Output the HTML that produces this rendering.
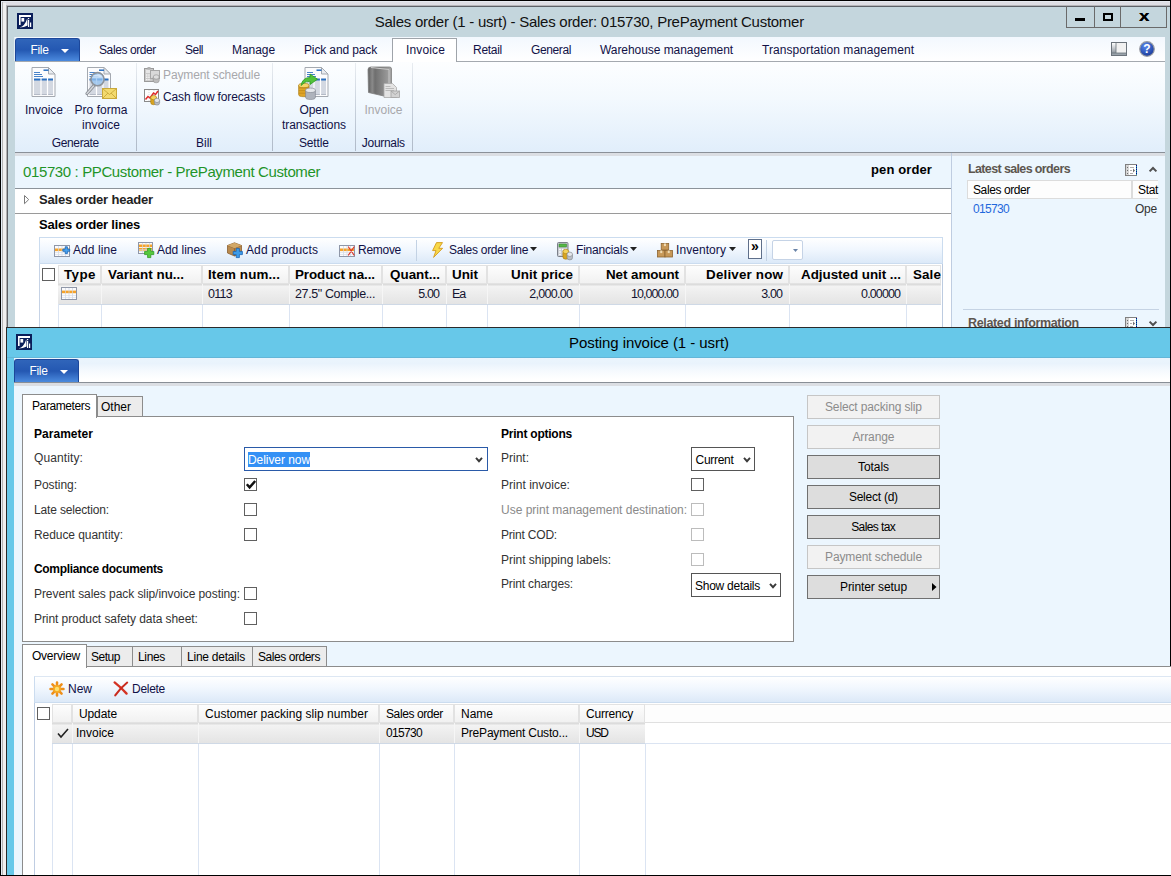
<!DOCTYPE html>
<html lang="en"><head><meta charset="utf-8"><title>Sales order - Posting invoice</title>
<style>
html,body{margin:0;padding:0;background:#fff;}
body{width:1171px;height:876px;overflow:hidden;font-family:"Liberation Sans",sans-serif;}
#root{position:relative;width:1171px;height:876px;overflow:hidden;background:#fff;}
#root div{position:absolute;box-sizing:border-box;}
#root svg{position:absolute;overflow:visible;}
.t{position:absolute;white-space:pre;color:#000;}
.cb{background:#fff;border:1px solid #606060;}
.cbd{background:#fff;border:1px solid #bcbcbc;}
.btn{background:#dddddd;border:1px solid #707070;}
.btnd{background:#f2f2f2;border:1px solid #c6c6c6;}
.file{background:linear-gradient(#3065ba,#2458b2 50%,#4b8ade);border:1px solid #1c479a;border-bottom:none;border-radius:3px 3px 0 0;}
.hc{background:linear-gradient(#fdfdfd,#f1f1f1);border:1px solid #e2e2e2;}

</style></head>
<body>
<div id="root">
<div style="left:0px;top:0px;width:1171px;height:876px;background:#000"></div>
<div style="left:1px;top:1px;width:1169px;height:1px;background:#e6eaf0"></div>
<div style="left:1px;top:2px;width:1169px;height:3px;background:#dedee4"></div>
<div style="left:1px;top:5px;width:1169px;height:1px;background:#b4b4b8"></div>
<div style="left:1px;top:6px;width:1169px;height:1px;background:#5e6268"></div>
<div style="left:1px;top:7px;width:1169px;height:868px;background:#c4d6dd"></div>
<div style="left:1px;top:1px;width:1px;height:874px;background:#e6eef6"></div>
<div style="left:2px;top:2px;width:1px;height:873px;background:#b4b4b4"></div>
<div style="left:3px;top:3px;width:3px;height:872px;background:#efefef"></div>
<div style="left:6px;top:6px;width:1px;height:869px;background:#b0b0b0"></div>
<div style="left:7px;top:6px;width:1px;height:869px;background:#5e6268"></div>
<div style="left:1170px;top:0px;width:1px;height:876px;background:#000"></div>
<span class="t" style="left:374.8px;top:12px;font-size:15px;line-height:19px;color:#111;letter-spacing:-0.26px;">Sales order (1 - usrt) - Sales order: 015730, PrePayment Customer</span>
<div style="left:1066px;top:6px;width:101px;height:22px;border:1px solid #6a6a6a;border-top:none;background:transparent"></div>
<div style="left:1094px;top:6px;width:1px;height:21px;background:#6a6a6a"></div>
<div style="left:1120px;top:6px;width:1px;height:21px;background:#6a6a6a"></div>
<div style="left:1075px;top:18px;width:10px;height:3px;background:#000"></div>
<div style="left:1103px;top:13px;width:10px;height:8px;border:2px solid #000"></div>
<span class="t" style="left:1140.3px;top:6px;font-size:15px;line-height:19px;font-weight:700;transform:scaleX(1.25);text-shadow:0 0 .5px #000;">x</span>
<div style="left:15px;top:37px;width:1150px;height:25px;background:linear-gradient(#f3f8fe,#ffffff)"></div>
<div style="left:14px;top:37px;width:1px;height:24px;background:#e4eef4"></div>
<div style="left:15px;top:61px;width:1150px;height:91px;background:linear-gradient(#fdfeff,#f3f9fe 42%,#e1eefb)"></div>
<div style="left:15px;top:61px;width:1150px;height:1px;background:#a4a9af"></div>
<div style="left:15px;top:152px;width:1150px;height:1px;background:#8a9098"></div>
<div class="file" style="left:15px;top:38px;width:65px;height:23px;"></div>
<span class="t" style="left:30.5px;top:42px;font-size:12px;line-height:16px;color:#fff;letter-spacing:-0.34px;">File</span>
<svg style="left:61px;top:49px" width="8" height="4"><path d="M0 0h8L4 4z" fill="#fff"/></svg>
<div style="left:392px;top:38px;width:65px;height:24px;background:#fff;border:1px solid #9fa4aa;border-bottom:none"></div>
<span class="t" style="left:99px;top:42px;font-size:12px;line-height:16px;color:#111146;letter-spacing:-0.4px;">Sales order</span>
<span class="t" style="left:185px;top:42px;font-size:12px;line-height:16px;color:#111146;letter-spacing:-0.5px;">Sell</span>
<span class="t" style="left:232px;top:42px;font-size:12px;line-height:16px;color:#111146;letter-spacing:-0.06px;">Manage</span>
<span class="t" style="left:304px;top:42px;font-size:12px;line-height:16px;color:#111146;letter-spacing:-0.13px;">Pick and pack</span>
<span class="t" style="left:406px;top:42px;font-size:12px;line-height:16px;color:#111146;letter-spacing:0.14px;">Invoice</span>
<span class="t" style="left:473px;top:42px;font-size:12px;line-height:16px;color:#111146;letter-spacing:-0.28px;">Retail</span>
<span class="t" style="left:531px;top:42px;font-size:12px;line-height:16px;color:#111146;letter-spacing:-0.39px;">General</span>
<span class="t" style="left:600px;top:42px;font-size:12px;line-height:16px;color:#111146;letter-spacing:-0.06px;">Warehouse management</span>
<span class="t" style="left:762px;top:42px;font-size:12px;line-height:16px;color:#111146;letter-spacing:0.07px;">Transportation management</span>
<div style="left:136px;top:63px;width:1px;height:88px;background:linear-gradient(rgba(175,185,198,.25),#b0bac8)"></div>
<div style="left:272px;top:63px;width:1px;height:88px;background:linear-gradient(rgba(175,185,198,.25),#b0bac8)"></div>
<div style="left:355px;top:63px;width:1px;height:88px;background:linear-gradient(rgba(175,185,198,.25),#b0bac8)"></div>
<div style="left:412px;top:63px;width:1px;height:88px;background:linear-gradient(rgba(175,185,198,.25),#b0bac8)"></div>
<span class="t" style="left:51.8px;top:135px;font-size:12px;line-height:16px;color:#111146;letter-spacing:-0.38px;">Generate</span>
<span class="t" style="left:196.0px;top:135px;font-size:12px;line-height:16px;color:#111146;">Bill</span>
<span class="t" style="left:298.9px;top:135px;font-size:12px;line-height:16px;color:#111146;letter-spacing:-0.11px;">Settle</span>
<span class="t" style="left:361.8px;top:135px;font-size:12px;line-height:16px;color:#111146;letter-spacing:-0.29px;">Journals</span>
<span class="t" style="left:25.0px;top:102px;font-size:12px;line-height:16px;color:#111146;">Invoice</span>
<span class="t" style="left:74.5px;top:102px;font-size:12px;line-height:16px;color:#111146;letter-spacing:0.03px;">Pro forma</span>
<span class="t" style="left:82.1px;top:117px;font-size:12px;line-height:16px;color:#111146;letter-spacing:0.09px;">invoice</span>
<span class="t" style="left:299.5px;top:102px;font-size:12px;line-height:16px;color:#111146;letter-spacing:-0.09px;">Open</span>
<span class="t" style="left:282.0px;top:117px;font-size:12px;line-height:16px;color:#111146;letter-spacing:-0.06px;">transactions</span>
<span class="t" style="left:364.5px;top:102px;font-size:12px;line-height:16px;color:#a8a8ac;">Invoice</span>
<span class="t" style="left:163px;top:67px;font-size:12px;line-height:16px;color:#a8a8ac;letter-spacing:-0.11px;">Payment schedule</span>
<span class="t" style="left:163px;top:89px;font-size:12px;line-height:16px;color:#111146;letter-spacing:-0.14px;">Cash flow forecasts</span>
<svg style="left:17px;top:13px" width="16" height="16" viewBox="0 0 16 16"><rect width="16" height="16" fill="#0b1f5a"/><rect x="2" y="2" width="12" height="2" fill="#fff"/><rect x="2" y="2" width="1.6" height="10" fill="#fff"/><rect x="4.4" y="5" width="2.8" height="3.6" fill="#fff"/><path d="M2.5 14.6Q8 13 10.3 5.2L10.6 12.5Q7 14.6 2.5 14.6z" fill="#fff"/><rect x="11" y="7" width="1.2" height="7" fill="#fff"/><rect x="11" y="5" width="1.2" height="1.2" fill="#fff"/><rect x="13" y="9.5" width="1.2" height="4.5" fill="#fff"/></svg>
<svg style="left:28px;top:66px" width="32" height="32" viewBox="0 0 32 32"><g transform="translate(3.5,1)"><path d="M.5 .5h16.5l6.5 6.5v22.5h-23z" fill="#fcfcfd" stroke="#a4a9b0"/><path d="M17 .5v6.5h6.5z" fill="#e9ecf0" stroke="#a4a9b0" stroke-linejoin="round"/><rect x="2.5" y="12" width="19" height="15.5" fill="#d3d8e1"/><rect x="2.5" y="27" width="19" height="1" fill="#b4bac6"/><rect x="2.5" y="11.5" width="19" height="2" fill="#2a6fc0"/><path d="M9.5 11v17M16 11v17" stroke="#fff" stroke-width="1.2"/><path d="M2.5 5.5h6M2.5 7.5h8M2.5 9.5h9" stroke="#2a6fc0" stroke-width="1" opacity=".85"/><path d="M12 3.2h5" stroke="#2a6fc0" stroke-width="1.5"/></g></svg>
<svg style="left:85px;top:66px" width="32" height="32" viewBox="0 0 32 32"><g transform="translate(2,1)"><path d="M.5 .5h16.5l6.5 6.5v22.5h-23z" fill="#fcfcfd" stroke="#a4a9b0"/><path d="M17 .5v6.5h6.5z" fill="#e9ecf0" stroke="#a4a9b0" stroke-linejoin="round"/><rect x="2.5" y="12" width="19" height="15.5" fill="#d3d8e1"/><rect x="2.5" y="27" width="19" height="1" fill="#b4bac6"/><rect x="2.5" y="11.5" width="19" height="2" fill="#2a6fc0"/><path d="M9.5 11v17M16 11v17" stroke="#fff" stroke-width="1.2"/><path d="M2.5 5.5h6M2.5 7.5h8M2.5 9.5h9" stroke="#2a6fc0" stroke-width="1" opacity=".85"/><path d="M12 3.2h5" stroke="#2a6fc0" stroke-width="1.5"/></g><path d="M9 19.5L2 27.5" stroke="#8a8f96" stroke-width="3.2" stroke-linecap="round"/><path d="M9 19.5L2 27.5" stroke="#d5d8dc" stroke-width="1.4" stroke-linecap="round"/><circle cx="12.5" cy="13.2" r="6.6" fill="rgba(150,195,240,.78)" stroke="#8d939b" stroke-width="1.6"/><path d="M7.5 11.5a5.5 5.5 0 0 1 10 0z" fill="rgba(255,255,255,.45)"/><rect x="17.5" y="22.5" width="14" height="10" fill="#f3da6e" stroke="#c9a83a"/><path d="M17.5 22.5L24.5 28.5L31.5 22.5M17.5 32.5L23 27M31.5 32.5L26 27" fill="none" stroke="#c9a83a" stroke-width=".9"/></svg>
<svg style="left:144px;top:67px" width="16" height="16" viewBox="0 0 16 16"><rect x=".5" y="1.5" width="9" height="13" fill="#c9c9c9" stroke="#9a9a9a"/><rect x="2" y="3" width="6" height="3" fill="#e6e6e6"/><path d="M2 8h1.5M4.2 8h1.5M6.4 8h1.5M2 10.3h1.5M4.2 10.3h1.5M6.4 10.3h1.5M2 12.6h1.5M4.2 12.6h1.5" stroke="#f2f2f2" stroke-width="1.4"/><rect x="6.5" y="3.5" width="9" height="8" fill="#d9d9d9" stroke="#a6a6a6"/><rect x="3.5" y="0" width="3" height="2.5" fill="#b0b0b0"/><path d="M9.2 10v3.6a3 2.2 0 0 0 6 0v-3.6z" fill="#bdbdbd" stroke="#8e8e8e" stroke-width=".6"/><ellipse cx="12.2" cy="10" rx="3" ry="2.2" fill="#dedede" stroke="#8e8e8e" stroke-width=".6"/></svg>
<svg style="left:144px;top:89px" width="16" height="16" viewBox="0 0 16 16"><rect x=".5" y=".5" width="14" height="12" fill="#fdfdfd" stroke="#8a8a8a"/><path d="M5 1v11M10 1v11" stroke="#c8c8c8" stroke-width=".6" stroke-dasharray="1 1"/><path d="M1.5 10.5L4 7.5L6 9L9.5 4L11.5 5.5L14 2" fill="none" stroke="#e02a2a" stroke-width="1.5"/><path d="M6.699999999999999 8.6v4.9a2.9 2.2 0 0 0 5.8 0v-4.9z" fill="#d9a520" stroke="#a67a10" stroke-width=".6"/><ellipse cx="9.6" cy="8.6" rx="2.9" ry="2.2" fill="#f4d25a" stroke="#a67a10" stroke-width=".6"/><path d="M10.4 11.4v2.5a2.6 2.2 0 0 0 5.2 0v-2.5z" fill="#b9bdc4" stroke="#80858c" stroke-width=".6"/><ellipse cx="13" cy="11.4" rx="2.6" ry="2.2" fill="#e3e6ea" stroke="#80858c" stroke-width=".6"/></svg>
<svg style="left:298px;top:66px" width="32" height="32" viewBox="0 0 32 32"><g transform="translate(6.5,1)"><path d="M.5 .5h16.5l6.5 6.5v22.5h-23z" fill="#fcfcfd" stroke="#a4a9b0"/><path d="M17 .5v6.5h6.5z" fill="#e9ecf0" stroke="#a4a9b0" stroke-linejoin="round"/><rect x="2.5" y="12" width="19" height="15.5" fill="#d3d8e1"/><rect x="2.5" y="27" width="19" height="1" fill="#b4bac6"/><rect x="2.5" y="11.5" width="19" height="2" fill="#2a6fc0"/><path d="M9.5 11v17M16 11v17" stroke="#fff" stroke-width="1.2"/><path d="M2.5 5.5h6M2.5 7.5h8M2.5 9.5h9" stroke="#2a6fc0" stroke-width="1" opacity=".85"/><path d="M12 3.2h5" stroke="#2a6fc0" stroke-width="1.5"/></g><path d="M0.5999999999999996 19.5v9a5.2 2.2 0 0 0 10.4 0v-9z" fill="#dfa427" stroke="#a6780f" stroke-width=".6"/><ellipse cx="5.8" cy="19.5" rx="5.2" ry="2.2" fill="#f6d66a" stroke="#a6780f" stroke-width=".6"/><path d="M.8 22h10M.8 24.6h10M.8 27.2h10" stroke="#b98314" stroke-width=".6"/><path d="M7.6 24.3v7a4.9 2.2 0 0 0 9.8 0v-7z" fill="#aeb3bc" stroke="#7c828b" stroke-width=".6"/><ellipse cx="12.5" cy="24.3" rx="4.9" ry="2.2" fill="#e6e8ec" stroke="#7c828b" stroke-width=".6"/><path d="M3 19.5Q4.5 11.5 12 11.5V8L19.5 13.2L12 18.5V15.2Q7 15 3 19.5z" fill="#52c23a" stroke="#2f9a22" stroke-width=".8" stroke-linejoin="round"/></svg>
<svg style="left:367px;top:66px" width="32" height="32" viewBox="0 0 32 32"><defs><linearGradient id="bk" x1="0" x2="1"><stop offset="0" stop-color="#5f5f5f"/><stop offset=".18" stop-color="#8a8a8a"/><stop offset=".3" stop-color="#6f6f6f"/><stop offset="1" stop-color="#a6a6a6"/></linearGradient></defs><path d="M1 3.5Q1 1 4 1H22.5Q24.5 1 24.5 3V26L19 30.5L1.5 26.5z" fill="url(#bk)" stroke="#7d7d7d" stroke-width=".8"/><path d="M4 1.5L22 3.5V27" fill="none" stroke="#c9c9c9" stroke-width="1"/><path d="M17 17.5h8.5l4 4v10h-12.5z" fill="#e3e3e3" stroke="#a9a9a9" stroke-width=".8"/><path d="M18.5 20.5h5M18.5 22.5h8.5M18.5 24.5h8.5" stroke="#b5b5b5" stroke-width=".9"/><rect x="24" y="25" width="8.5" height="6.5" fill="#d2d2d2" stroke="#a3a3a3" stroke-width=".8"/><path d="M24 25L28.2 28.6L32.5 25" fill="none" stroke="#a3a3a3" stroke-width=".8"/></svg>
<svg style="left:1111px;top:42px" width="16" height="14" viewBox="0 0 16 14"><defs><linearGradient id="lg1" x1="0" y1="0" x2="0" y2="1"><stop offset="0" stop-color="#fff"/><stop offset="1" stop-color="#8f979f"/></linearGradient></defs><rect x=".5" y=".5" width="15" height="13" fill="#f1f1f1" stroke="#6b737b"/><rect x="1" y="1" width="4" height="10" fill="url(#lg1)"/><path d="M5 1v10" stroke="#6b737b" stroke-width=".8"/><rect x="1" y="11" width="14" height="2" fill="#9aa3ab"/><path d="M1 11h14" stroke="#6b737b" stroke-width=".8"/></svg>
<svg style="left:1139px;top:41px" width="16" height="16" viewBox="0 0 16 16"><defs><radialGradient id="hg" cx=".4" cy=".3" r=".8"><stop offset="0" stop-color="#5a8af0"/><stop offset="1" stop-color="#12318f"/></radialGradient></defs><circle cx="8" cy="8" r="7.3" fill="url(#hg)" stroke="#9a9da3" stroke-width="1.2"/><text x="8" y="12.3" text-anchor="middle" font-family="Liberation Sans, sans-serif" font-weight="700" font-size="12" fill="#fff">?</text></svg>
<div style="left:15px;top:153px;width:1150px;height:175px;background:#ecf6fe"></div>
<div style="left:15px;top:153px;width:1150px;height:3px;background:#dbdee3"></div>
<div style="left:15px;top:189px;width:936px;height:139px;background:#fff"></div>
<div style="left:951px;top:153px;width:1px;height:175px;background:#bfcde1"></div>
<div style="left:15px;top:188px;width:936px;height:1px;background:#8c939a"></div>
<div style="left:15px;top:213px;width:936px;height:1px;background:#9a9a9a"></div>
<span class="t" style="left:23px;top:162px;font-size:15px;line-height:19px;color:#1f9428;letter-spacing:-0.38px;">015730 : PPCustomer - PrePayment Customer</span>
<span class="t" style="left:871px;top:161px;font-size:13px;line-height:17px;font-weight:700;letter-spacing:0.11px;">pen order</span>
<svg style="left:24px;top:195px" width="6" height="10"><path d="M.5 .5L4.7 4.6L.5 8.7z" fill="none" stroke="#7a7a7a" stroke-width="1"/></svg>
<span class="t" style="left:39px;top:191px;font-size:13px;line-height:17px;font-weight:700;color:#222;letter-spacing:-0.17px;">Sales order header</span>
<span class="t" style="left:39px;top:216px;font-size:13px;line-height:17px;font-weight:700;letter-spacing:-0.18px;">Sales order lines</span>
<div style="left:39px;top:237px;width:904px;height:27px;background:linear-gradient(#ffffff,#f1f7fe 45%,#dce9f8);border:1px solid #cbdcef"></div>
<span class="t" style="left:73px;top:242px;font-size:12px;line-height:16px;color:#101046;letter-spacing:0.08px;">Add line</span>
<span class="t" style="left:157px;top:242px;font-size:12px;line-height:16px;color:#101046;letter-spacing:-0.04px;">Add lines</span>
<span class="t" style="left:246px;top:242px;font-size:12px;line-height:16px;color:#101046;letter-spacing:0.11px;">Add products</span>
<span class="t" style="left:358px;top:242px;font-size:12px;line-height:16px;color:#101046;letter-spacing:-0.28px;">Remove</span>
<span class="t" style="left:449px;top:242px;font-size:12px;line-height:16px;color:#101046;letter-spacing:-0.27px;">Sales order line</span>
<span class="t" style="left:576px;top:242px;font-size:12px;line-height:16px;color:#101046;letter-spacing:-0.2px;">Financials</span>
<span class="t" style="left:676px;top:242px;font-size:12px;line-height:16px;color:#101046;letter-spacing:0.07px;">Inventory</span>
<svg style="left:530px;top:247px" width="7" height="4"><path d="M0 0h7L3.5 4z" fill="#222"/></svg>
<svg style="left:630px;top:247px" width="7" height="4"><path d="M0 0h7L3.5 4z" fill="#222"/></svg>
<svg style="left:729px;top:247px" width="7" height="4"><path d="M0 0h7L3.5 4z" fill="#222"/></svg>
<div style="left:416px;top:240px;width:1px;height:21px;background:#c3d2e4"></div>
<div style="left:748px;top:239px;width:14px;height:20px;background:#fff;border:1px solid #5f6f8a"></div>
<span class="t" style="left:751.1px;top:237px;font-size:14px;line-height:18px;font-weight:700;">»</span>
<div style="left:766px;top:240px;width:1px;height:21px;background:#c3d2e4"></div>
<div style="left:772px;top:240px;width:31px;height:20px;background:#fff;border:1px solid #c5d3e6;border-radius:2px"></div>
<svg style="left:793px;top:249px" width="5" height="3"><path d="M0 0h5L2.5 3z" fill="#6a84a8"/></svg>
<div style="left:39px;top:264px;width:1px;height:63px;background:#c6d3e6"></div>
<div style="left:40px;top:264px;width:903px;height:20px;background:#fff"></div>
<div class="cb" style="left:42px;top:268px;width:13px;height:13px;"></div>
<div class="hc" style="left:58px;top:265px;width:43px;height:19px;"></div>
<div class="hc" style="left:101px;top:265px;width:101px;height:19px;"></div>
<div class="hc" style="left:202px;top:265px;width:87px;height:19px;"></div>
<div class="hc" style="left:289px;top:265px;width:93px;height:19px;"></div>
<div class="hc" style="left:382px;top:265px;width:64px;height:19px;"></div>
<div class="hc" style="left:446px;top:265px;width:41px;height:19px;"></div>
<div class="hc" style="left:487px;top:265px;width:92px;height:19px;"></div>
<div class="hc" style="left:579px;top:265px;width:106px;height:19px;"></div>
<div class="hc" style="left:685px;top:265px;width:104px;height:19px;"></div>
<div class="hc" style="left:789px;top:265px;width:117px;height:19px;"></div>
<div class="hc" style="left:906px;top:265px;width:35px;height:19px;"></div>
<span class="t" style="left:64px;top:266px;font-size:13.4px;line-height:17.4px;font-weight:700;letter-spacing:0.43px;">Type</span>
<span class="t" style="left:108px;top:266px;font-size:13.4px;line-height:17.4px;font-weight:700;letter-spacing:0.01px;">Variant nu...</span>
<span class="t" style="left:208px;top:266px;font-size:13.4px;line-height:17.4px;font-weight:700;letter-spacing:0.12px;">Item num...</span>
<span class="t" style="left:295px;top:266px;font-size:13.4px;line-height:17.4px;font-weight:700;letter-spacing:-0.09px;">Product na...</span>
<span class="t" style="left:390.0px;top:266px;font-size:13.4px;line-height:17.4px;font-weight:700;letter-spacing:0.02px;">Quant...</span>
<span class="t" style="left:452px;top:266px;font-size:13.4px;line-height:17.4px;font-weight:700;letter-spacing:-0.01px;">Unit</span>
<span class="t" style="left:511.1px;top:266px;font-size:13.4px;line-height:17.4px;font-weight:700;letter-spacing:0.02px;">Unit price</span>
<span class="t" style="left:606.0px;top:266px;font-size:13.4px;line-height:17.4px;font-weight:700;letter-spacing:-0.07px;">Net amount</span>
<span class="t" style="left:706.1px;top:266px;font-size:13.4px;line-height:17.4px;font-weight:700;letter-spacing:0.17px;">Deliver now</span>
<span class="t" style="left:801.0px;top:266px;font-size:13.4px;line-height:17.4px;font-weight:700;letter-spacing:-0.03px;">Adjusted unit ...</span>
<span class="t" style="left:913px;top:266px;font-size:13.4px;line-height:17.4px;font-weight:700;letter-spacing:0.11px;">Sale</span>
<div style="left:58px;top:284px;width:883px;height:21px;background:linear-gradient(#dcdcdc 0,#dcdcdc 1px,#f3f3f3 2px,#e4e4e4 100%);border-bottom:1px solid #cfd9e6"></div>
<div style="left:101px;top:284px;width:1px;height:20px;background:#f6f6f6"></div>
<div style="left:101px;top:305px;width:1px;height:23px;background:#dbe4f2"></div>
<div style="left:202px;top:284px;width:1px;height:20px;background:#f6f6f6"></div>
<div style="left:202px;top:305px;width:1px;height:23px;background:#dbe4f2"></div>
<div style="left:289px;top:284px;width:1px;height:20px;background:#f6f6f6"></div>
<div style="left:289px;top:305px;width:1px;height:23px;background:#dbe4f2"></div>
<div style="left:382px;top:284px;width:1px;height:20px;background:#f6f6f6"></div>
<div style="left:382px;top:305px;width:1px;height:23px;background:#dbe4f2"></div>
<div style="left:446px;top:284px;width:1px;height:20px;background:#f6f6f6"></div>
<div style="left:446px;top:305px;width:1px;height:23px;background:#dbe4f2"></div>
<div style="left:487px;top:284px;width:1px;height:20px;background:#f6f6f6"></div>
<div style="left:487px;top:305px;width:1px;height:23px;background:#dbe4f2"></div>
<div style="left:579px;top:284px;width:1px;height:20px;background:#f6f6f6"></div>
<div style="left:579px;top:305px;width:1px;height:23px;background:#dbe4f2"></div>
<div style="left:685px;top:284px;width:1px;height:20px;background:#f6f6f6"></div>
<div style="left:685px;top:305px;width:1px;height:23px;background:#dbe4f2"></div>
<div style="left:789px;top:284px;width:1px;height:20px;background:#f6f6f6"></div>
<div style="left:789px;top:305px;width:1px;height:23px;background:#dbe4f2"></div>
<div style="left:906px;top:284px;width:1px;height:20px;background:#f6f6f6"></div>
<div style="left:906px;top:305px;width:1px;height:23px;background:#dbe4f2"></div>
<div style="left:58px;top:304px;width:1px;height:24px;background:#dbe4f2"></div>
<span class="t" style="left:208px;top:286px;font-size:12.5px;line-height:16.5px;color:#141430;letter-spacing:-0.72px;">0113</span>
<span class="t" style="left:295px;top:286px;font-size:12.5px;line-height:16.5px;color:#141430;letter-spacing:-0.38px;">27.5" Comple...</span>
<span class="t" style="left:418.2px;top:286px;font-size:12.5px;line-height:16.5px;color:#141430;letter-spacing:-0.84px;">5.00</span>
<span class="t" style="left:452px;top:286px;font-size:12.5px;line-height:16.5px;color:#141430;letter-spacing:-1.2px;">Ea</span>
<span class="t" style="left:529.3px;top:286px;font-size:12.5px;line-height:16.5px;color:#141430;letter-spacing:-0.71px;">2,000.00</span>
<span class="t" style="left:631.1px;top:286px;font-size:12.5px;line-height:16.5px;color:#141430;letter-spacing:-0.96px;">10,000.00</span>
<span class="t" style="left:761.2px;top:286px;font-size:12.5px;line-height:16.5px;color:#141430;letter-spacing:-0.84px;">3.00</span>
<span class="t" style="left:861.1px;top:286px;font-size:12.5px;line-height:16.5px;color:#141430;letter-spacing:-0.88px;">0.00000</span>
<div style="left:942px;top:264px;width:1px;height:63px;background:#bccbe0"></div>
<span class="t" style="left:968px;top:161px;font-size:12.5px;line-height:16.5px;font-weight:700;color:#5d5650;letter-spacing:-0.63px;">Latest sales orders</span>
<div style="left:967px;top:180px;width:165px;height:19px;background:#fdfdfd;border:1px solid #dcdcdc"></div>
<div style="left:1132px;top:180px;width:26px;height:19px;background:#fdfdfd;border:1px solid #dcdcdc;border-right:none"></div>
<span class="t" style="left:973px;top:182px;font-size:12px;line-height:16px;letter-spacing:-0.4px;">Sales order</span>
<span class="t" style="left:1138px;top:182px;font-size:12px;line-height:16px;letter-spacing:-0.34px;">Stat</span>
<span class="t" style="left:973px;top:201px;font-size:12px;line-height:16px;color:#1f68dc;letter-spacing:-0.67px;">015730</span>
<span class="t" style="left:1135px;top:201px;font-size:12px;line-height:16px;color:#333;letter-spacing:-0.23px;">Ope</span>
<div style="left:963px;top:309px;width:196px;height:1px;background:#c5d3e4"></div>
<span class="t" style="left:968px;top:315px;font-size:12.5px;line-height:16.5px;font-weight:700;color:#5d5650;letter-spacing:-0.34px;">Related information</span>
<svg style="left:1125px;top:164px" width="12" height="12" viewBox="0 0 12 12"><rect x=".5" y=".5" width="11" height="11" fill="#fff" stroke="#808080"/><rect x="1" y="1" width="3" height="10" fill="#d6d6d6"/><path d="M2 3.5h1M2 6.5h1M2 9.5h1" stroke="#6e6e6e" stroke-width="1"/><path d="M5 3.5h4M5 6.5h2M5 9.5h3" stroke="#b0b0b0" stroke-width="1"/><path d="M8 4.5L10 6.5L8 8.5z" fill="#6e6e6e"/><path d="M11.5 1v10" stroke="#000090" stroke-width="1" stroke-dasharray="1 1"/><path d="M11.5 2v9" stroke="#1a9aa0" stroke-width="1" stroke-dasharray="1 1"/></svg>
<svg style="left:1125px;top:317px" width="12" height="12" viewBox="0 0 12 12"><rect x=".5" y=".5" width="11" height="11" fill="#fff" stroke="#808080"/><rect x="1" y="1" width="3" height="10" fill="#d6d6d6"/><path d="M2 3.5h1M2 6.5h1M2 9.5h1" stroke="#6e6e6e" stroke-width="1"/><path d="M5 3.5h4M5 6.5h2M5 9.5h3" stroke="#b0b0b0" stroke-width="1"/><path d="M8 4.5L10 6.5L8 8.5z" fill="#6e6e6e"/><path d="M11.5 1v10" stroke="#000090" stroke-width="1" stroke-dasharray="1 1"/><path d="M11.5 2v9" stroke="#1a9aa0" stroke-width="1" stroke-dasharray="1 1"/></svg>
<svg style="left:1148px;top:166px" width="10" height="7"><path d="M1.6 5.4L5 2L8.4 5.4" fill="none" stroke="#505050" stroke-width="2"/></svg>
<svg style="left:1148px;top:320px" width="10" height="7"><path d="M1.6 1.6L5 5L8.4 1.6" fill="none" stroke="#505050" stroke-width="2"/></svg>
<div style="left:6px;top:327px;width:1165px;height:549px;background:#2b2b2b"></div>
<div style="left:7px;top:328px;width:1163px;height:547px;background:#67c8e9"></div>
<div style="left:1170px;top:327px;width:1px;height:549px;background:#000"></div>
<span class="t" style="left:569.0px;top:333px;font-size:15px;line-height:19px;letter-spacing:-0.07px;">Posting invoice (1 - usrt)</span>
<div style="left:7px;top:357px;width:1163px;height:1px;background:#63b6d8"></div>
<div style="left:14px;top:358px;width:1156px;height:24px;background:linear-gradient(#ebf5fd,#e9f3fc 22%,#f6fafe 55%,#ffffff 88%)"></div>
<div style="left:14px;top:382px;width:1156px;height:1px;background:#888e96"></div>
<div class="file" style="left:14px;top:359px;width:65px;height:23px;"></div>
<span class="t" style="left:29.5px;top:363px;font-size:12px;line-height:16px;color:#fff;letter-spacing:-0.34px;">File</span>
<svg style="left:60px;top:370px" width="8" height="4"><path d="M0 0h8L4 4z" fill="#fff"/></svg>
<div style="left:14px;top:383px;width:1156px;height:492px;background:#ecf6fe"></div>
<div style="left:14px;top:383px;width:1156px;height:3px;background:#dbdee3"></div>
<div style="left:22px;top:416px;width:772px;height:226px;background:#fff;border:1px solid #8c8c8c"></div>
<div style="left:97px;top:396px;width:46px;height:21px;background:#ececec;border:1px solid #8c8c8c"></div>
<div style="left:22px;top:394px;width:75px;height:24px;background:#fff;border:1px solid #8c8c8c;border-bottom:none"></div>
<span class="t" style="left:32px;top:398px;font-size:12px;line-height:16px;letter-spacing:-0.4px;">Parameters</span>
<span class="t" style="left:101px;top:399px;font-size:12px;line-height:16px;">Other</span>
<span class="t" style="left:34px;top:426px;font-size:12px;line-height:16px;font-weight:700;letter-spacing:0.03px;">Parameter</span>
<span class="t" style="left:34px;top:450px;font-size:12px;line-height:16px;color:#333;letter-spacing:0.11px;">Quantity:</span>
<span class="t" style="left:34px;top:477px;font-size:12px;line-height:16px;color:#333;letter-spacing:-0.04px;">Posting:</span>
<span class="t" style="left:34px;top:502px;font-size:12px;line-height:16px;color:#333;letter-spacing:-0.16px;">Late selection:</span>
<span class="t" style="left:34px;top:527px;font-size:12px;line-height:16px;color:#333;letter-spacing:-0.07px;">Reduce quantity:</span>
<span class="t" style="left:34px;top:561px;font-size:12px;line-height:16px;font-weight:700;letter-spacing:-0.32px;">Compliance documents</span>
<span class="t" style="left:34px;top:586px;font-size:12px;line-height:16px;color:#333;letter-spacing:-0.07px;">Prevent sales pack slip/invoice posting:</span>
<span class="t" style="left:34px;top:611px;font-size:12px;line-height:16px;color:#333;letter-spacing:-0.07px;">Print product safety data sheet:</span>
<div style="left:244px;top:447px;width:244px;height:24px;background:#fff;border:1px solid #2a5aa8"></div>
<div style="left:248px;top:452px;width:62px;height:15px;background:#3390f5"></div>
<span class="t" style="left:248px;top:452px;font-size:12px;line-height:16px;color:#fff;letter-spacing:-0.06px;">Deliver now</span>
<svg style="left:475px;top:457px" width="8" height="6"><path d="M1 .8L4 4.2L7 .8" fill="none" stroke="#3a3a3a" stroke-width="1.9"/></svg>
<div class="cb" style="left:244px;top:478px;width:13px;height:13px;"></div>
<div class="cb" style="left:244px;top:503px;width:13px;height:13px;"></div>
<div class="cb" style="left:244px;top:528px;width:13px;height:13px;"></div>
<div class="cb" style="left:244px;top:587px;width:13px;height:13px;"></div>
<div class="cb" style="left:244px;top:612px;width:13px;height:13px;"></div>
<svg style="left:246px;top:480px" width="10" height="9"><path d="M.8 4.2L3.6 7.4L9.2 1" fill="none" stroke="#111" stroke-width="2.4"/></svg>
<span class="t" style="left:501px;top:426px;font-size:12px;line-height:16px;font-weight:700;letter-spacing:-0.23px;">Print options</span>
<span class="t" style="left:501px;top:450px;font-size:12px;line-height:16px;color:#333;">Print:</span>
<span class="t" style="left:501px;top:477px;font-size:12px;line-height:16px;color:#333;letter-spacing:0.02px;">Print invoice:</span>
<span class="t" style="left:501px;top:502px;font-size:12px;line-height:16px;color:#8a8a8a;">Use print management destination:</span>
<span class="t" style="left:501px;top:527px;font-size:12px;line-height:16px;color:#333;letter-spacing:-0.2px;">Print COD:</span>
<span class="t" style="left:501px;top:552px;font-size:12px;line-height:16px;color:#333;letter-spacing:-0.03px;">Print shipping labels:</span>
<span class="t" style="left:501px;top:576px;font-size:12px;line-height:16px;color:#333;letter-spacing:-0.15px;">Print charges:</span>
<div style="left:691px;top:447px;width:64px;height:24px;background:#fff;border:1px solid #555"></div>
<span class="t" style="left:695.5px;top:452px;font-size:12px;line-height:16px;letter-spacing:-0.29px;">Current</span>
<svg style="left:743px;top:457px" width="8" height="6"><path d="M1 .8L4 4.2L7 .8" fill="none" stroke="#3a3a3a" stroke-width="1.9"/></svg>
<div style="left:691px;top:573px;width:90px;height:24px;background:#fff;border:1px solid #555"></div>
<span class="t" style="left:695px;top:578px;font-size:12px;line-height:16px;letter-spacing:-0.25px;">Show details</span>
<svg style="left:769px;top:583px" width="8" height="6"><path d="M1 .8L4 4.2L7 .8" fill="none" stroke="#3a3a3a" stroke-width="1.9"/></svg>
<div class="cb" style="left:691px;top:478px;width:13px;height:13px;"></div>
<div class="cbd" style="left:691px;top:503px;width:13px;height:13px;"></div>
<div class="cbd" style="left:691px;top:528px;width:13px;height:13px;"></div>
<div class="cbd" style="left:691px;top:553px;width:13px;height:13px;"></div>
<div class="btnd" style="left:807px;top:395px;width:133px;height:24px;"></div>
<span class="t" style="left:825.0px;top:399px;font-size:12px;line-height:16px;color:#8c8c8c;letter-spacing:-0.13px;">Select packing slip</span>
<div class="btnd" style="left:807px;top:425px;width:133px;height:24px;"></div>
<span class="t" style="left:852.4px;top:429px;font-size:12px;line-height:16px;color:#8c8c8c;letter-spacing:-0.1px;">Arrange</span>
<div class="btn" style="left:807px;top:455px;width:133px;height:24px;"></div>
<span class="t" style="left:858.0px;top:459px;font-size:12px;line-height:16px;letter-spacing:-0.06px;">Totals</span>
<div class="btn" style="left:807px;top:485px;width:133px;height:24px;"></div>
<span class="t" style="left:848.9px;top:489px;font-size:12px;line-height:16px;letter-spacing:-0.24px;">Select (d)</span>
<div class="btn" style="left:807px;top:515px;width:133px;height:24px;"></div>
<span class="t" style="left:851.2px;top:519px;font-size:12px;line-height:16px;letter-spacing:-0.6px;">Sales tax</span>
<div class="btnd" style="left:807px;top:545px;width:133px;height:24px;"></div>
<span class="t" style="left:825.0px;top:549px;font-size:12px;line-height:16px;color:#8c8c8c;letter-spacing:-0.11px;">Payment schedule</span>
<div class="btn" style="left:807px;top:575px;width:133px;height:24px;"></div>
<span class="t" style="left:840.0px;top:579px;font-size:12px;line-height:16px;letter-spacing:-0.08px;">Printer setup</span>
<svg style="left:932px;top:583px" width="5" height="8"><path d="M0 0L4.5 4L0 8z" fill="#000"/></svg>
<div style="left:22px;top:666px;width:1149px;height:210px;background:#fff;border:1px solid #8c8c8c;border-right:none;border-bottom:none"></div>
<div style="left:86px;top:646px;width:47px;height:21px;background:#ececec;border:1px solid #8c8c8c"></div>
<span class="t" style="left:91px;top:649px;font-size:12px;line-height:16px;letter-spacing:-0.47px;">Setup</span>
<div style="left:132px;top:646px;width:50px;height:21px;background:#ececec;border:1px solid #8c8c8c"></div>
<span class="t" style="left:138px;top:649px;font-size:12px;line-height:16px;letter-spacing:-0.34px;">Lines</span>
<div style="left:181px;top:646px;width:72px;height:21px;background:#ececec;border:1px solid #8c8c8c"></div>
<span class="t" style="left:187px;top:649px;font-size:12px;line-height:16px;letter-spacing:-0.23px;">Line details</span>
<div style="left:252px;top:646px;width:75px;height:21px;background:#ececec;border:1px solid #8c8c8c"></div>
<span class="t" style="left:258px;top:649px;font-size:12px;line-height:16px;letter-spacing:-0.45px;">Sales orders</span>
<div style="left:22px;top:644px;width:65px;height:24px;background:#fff;border:1px solid #8c8c8c;border-bottom:none"></div>
<span class="t" style="left:32px;top:648px;font-size:12px;line-height:16px;letter-spacing:-0.25px;">Overview</span>
<div style="left:34px;top:676px;width:1137px;height:27px;background:linear-gradient(#ffffff,#f1f7fe 45%,#dce9f8);border:1px solid #cbdcef;border-top-color:#dde7f3;border-right:none"></div>
<span class="t" style="left:68px;top:681px;font-size:12px;line-height:16px;color:#101046;letter-spacing:-0.01px;">New</span>
<span class="t" style="left:132px;top:681px;font-size:12px;line-height:16px;color:#101046;letter-spacing:-0.28px;">Delete</span>
<div class="cb" style="left:37px;top:707px;width:13px;height:13px;"></div>
<div class="hc" style="left:52px;top:704px;width:20px;height:19px;"></div>
<div class="hc" style="left:72px;top:704px;width:126px;height:19px;"></div>
<div class="hc" style="left:198px;top:704px;width:181px;height:19px;"></div>
<div class="hc" style="left:379px;top:704px;width:75px;height:19px;"></div>
<div class="hc" style="left:454px;top:704px;width:125px;height:19px;"></div>
<div class="hc" style="left:579px;top:704px;width:66px;height:19px;"></div>
<div style="left:645px;top:704px;width:526px;height:19px;background:#fdfdfd;border-top:1px solid #e6e6e6;border-bottom:1px solid #e0e0e0"></div>
<span class="t" style="left:79px;top:706px;font-size:12px;line-height:16px;letter-spacing:-0.12px;">Update</span>
<span class="t" style="left:205px;top:706px;font-size:12px;line-height:16px;letter-spacing:0.03px;">Customer packing slip number</span>
<span class="t" style="left:386px;top:706px;font-size:12px;line-height:16px;letter-spacing:-0.4px;">Sales order</span>
<span class="t" style="left:461px;top:706px;font-size:12px;line-height:16px;">Name</span>
<span class="t" style="left:586px;top:706px;font-size:12px;line-height:16px;letter-spacing:-0.21px;">Currency</span>
<div style="left:52px;top:723px;width:593px;height:21px;background:linear-gradient(#dcdcdc 0,#dcdcdc 1px,#f3f3f3 2px,#e4e4e4 100%);border-bottom:1px solid #cfd9e6"></div>
<div style="left:645px;top:743px;width:526px;height:1px;background:#dbe4f2"></div>
<div style="left:72px;top:723px;width:1px;height:20px;background:#f6f6f6"></div>
<div style="left:198px;top:723px;width:1px;height:20px;background:#f6f6f6"></div>
<div style="left:379px;top:723px;width:1px;height:20px;background:#f6f6f6"></div>
<div style="left:454px;top:723px;width:1px;height:20px;background:#f6f6f6"></div>
<div style="left:579px;top:723px;width:1px;height:20px;background:#f6f6f6"></div>
<div style="left:52px;top:744px;width:1px;height:131px;background:#dbe4f2"></div>
<div style="left:72px;top:744px;width:1px;height:131px;background:#dbe4f2"></div>
<div style="left:198px;top:744px;width:1px;height:131px;background:#dbe4f2"></div>
<div style="left:379px;top:744px;width:1px;height:131px;background:#dbe4f2"></div>
<div style="left:454px;top:744px;width:1px;height:131px;background:#dbe4f2"></div>
<div style="left:579px;top:744px;width:1px;height:131px;background:#dbe4f2"></div>
<div style="left:645px;top:744px;width:1px;height:131px;background:#dbe4f2"></div>
<div style="left:34px;top:703px;width:1px;height:172px;background:#bfcde2"></div>
<span class="t" style="left:76px;top:725px;font-size:12px;line-height:16px;">Invoice</span>
<span class="t" style="left:386px;top:725px;font-size:12px;line-height:16px;letter-spacing:-0.67px;">015730</span>
<span class="t" style="left:461px;top:725px;font-size:12px;line-height:16px;letter-spacing:-0.2px;">PrePayment Custo...</span>
<span class="t" style="left:586px;top:725px;font-size:12px;line-height:16px;letter-spacing:-1.2px;">USD</span>
<svg style="left:57px;top:728px" width="12" height="10"><path d="M1 5.5L4 9L11 1" fill="none" stroke="#222" stroke-width="1.6"/></svg>
<svg style="left:54px;top:245px" width="16" height="12" viewBox="0 0 16 12"><rect x=".5" y=".5" width="15" height="11" fill="#fbfbfd" stroke="#8f97a8"/><rect x="1" y="3.5" width="14" height="2.6" fill="#f6a32a"/><path d="M4.5 1v10M8 1v10M11.5 1v10" stroke="#cfd5e2" stroke-width=".7"/><path d="M1 7.5h14M1 9.5h14" stroke="#d5dbe6" stroke-width=".6"/><path d="M11.200000000000001 1.8000000000000003h2.2v2.3h2.3v2.2h-2.3v2.3h-2.2v-2.3h-2.3v-2.2h2.3z" fill="#4aa3ee" stroke="#1763b8" stroke-width=".8" stroke-linejoin="round"/></svg>
<svg style="left:138px;top:242px" width="16" height="16" viewBox="0 0 16 16"><rect x=".5" y=".5" width="14" height="11" fill="#fbfbfd" stroke="#8f97a8"/><rect x="1" y="2.5" width="13" height="2.6" fill="#f6a32a"/><rect x="1" y="6" width="13" height="2.6" fill="#f6a32a"/><path d="M4.5 1v10M8 1v10M11.5 1v10" stroke="#cfd5e2" stroke-width=".7"/><path d="M1 7.5h13M1 9.5h13" stroke="#d5dbe6" stroke-width=".6"/><path d="M9.6 6.4h3.2v2.9999999999999996h2.9999999999999996v3.2h-2.9999999999999996v2.9999999999999996h-3.2v-2.9999999999999996h-2.9999999999999996v-3.2h2.9999999999999996z" fill="#57c93c" stroke="#2e9a1e" stroke-width=".8" stroke-linejoin="round"/></svg>
<svg style="left:227px;top:242px" width="16" height="16" viewBox="0 0 16 16"><path d="M.5 3.5L7.5 .8L14.5 3.5V11L7.5 14L.5 11z" fill="#b98a4e" stroke="#8a6030" stroke-width=".8"/><path d="M.5 3.5L7.5 6.2L14.5 3.5M7.5 6.2V14" fill="none" stroke="#8a6030" stroke-width=".8"/><path d="M.5 3.5L7.5 .8L14.5 3.5L7.5 6.2z" fill="#d2a868"/><path d="M9.200000000000001 6.4h3.2v2.9999999999999996h2.9999999999999996v3.2h-2.9999999999999996v2.9999999999999996h-3.2v-2.9999999999999996h-2.9999999999999996v-3.2h2.9999999999999996z" fill="#3d9be8" stroke="#1763b8" stroke-width=".8" stroke-linejoin="round"/></svg>
<svg style="left:339px;top:245px" width="16" height="12" viewBox="0 0 16 12"><rect x=".5" y=".5" width="15" height="11" fill="#fbfbfd" stroke="#8f97a8"/><rect x="1" y="3.5" width="14" height="2.6" fill="#f6a32a"/><path d="M4.5 1v10M8 1v10M11.5 1v10" stroke="#cfd5e2" stroke-width=".7"/><path d="M1 7.5h14M1 9.5h14" stroke="#d5dbe6" stroke-width=".6"/><path d="M9.5 2L15 10M15 2L9.5 10" stroke="#dd3428" stroke-width="1.25" stroke-linecap="round"/></svg>
<svg style="left:431px;top:242px" width="13" height="16" viewBox="0 0 13 16"><path d="M5.5 .6H11.5L7.8 6.3H11.6L2.6 15.4L5 8.6H1.6z" fill="#f8d848" stroke="#d49a1c" stroke-width=".9" stroke-linejoin="round"/></svg>
<svg style="left:557px;top:242px" width="16" height="16" viewBox="0 0 16 16"><rect x=".5" y=".5" width="10.5" height="14" rx="1" fill="#c9ccd2" stroke="#7b808a"/><rect x="2" y="2" width="7.5" height="3" fill="#57b947" stroke="#2f7a28" stroke-width=".5"/><path d="M2.2 7.5h1.6M5 7.5h1.6M7.8 7.5h1.6M2.2 10h1.6M5 10h1.6M2.2 12.5h1.6" stroke="#fff" stroke-width="1.5"/><path d="M5.9 9.5v5.5a2.9 2.2 0 0 0 5.8 0v-5.5z" fill="#d9a520" stroke="#a67a10" stroke-width=".6"/><ellipse cx="8.8" cy="9.5" rx="2.9" ry="2.2" fill="#f4d25a" stroke="#a67a10" stroke-width=".6"/><path d="M10.100000000000001 12.3v3.4a2.7 2.2 0 0 0 5.4 0v-3.4z" fill="#b9bdc4" stroke="#80858c" stroke-width=".6"/><ellipse cx="12.8" cy="12.3" rx="2.7" ry="2.2" fill="#e3e6ea" stroke="#80858c" stroke-width=".6"/></svg>
<svg style="left:657px;top:243px" width="16" height="15" viewBox="0 0 16 15"><rect x="4.2" y="0.5" width="7.5" height="6.5" fill="#c79858" stroke="#8d6430" stroke-width=".8"/><rect x="6.95" y="0.5" width="2" height="2.6" fill="#f0dcb4"/><rect x="0.5" y="7.5" width="7.5" height="6.5" fill="#c79858" stroke="#8d6430" stroke-width=".8"/><rect x="3.25" y="7.5" width="2" height="2.6" fill="#f0dcb4"/><rect x="8" y="7.5" width="7.5" height="6.5" fill="#c79858" stroke="#8d6430" stroke-width=".8"/><rect x="10.75" y="7.5" width="2" height="2.6" fill="#f0dcb4"/></svg>
<svg style="left:49px;top:681px" width="16" height="16" viewBox="0 0 16 16"><path d="M8 8L14.50 8.00" stroke="#ee8f1a" stroke-width="2.5" stroke-linecap="round"/><path d="M8 8L12.60 12.60" stroke="#ee8f1a" stroke-width="2.5" stroke-linecap="round"/><path d="M8 8L8.00 14.50" stroke="#ee8f1a" stroke-width="2.5" stroke-linecap="round"/><path d="M8 8L3.40 12.60" stroke="#ee8f1a" stroke-width="2.5" stroke-linecap="round"/><path d="M8 8L1.50 8.00" stroke="#ee8f1a" stroke-width="2.5" stroke-linecap="round"/><path d="M8 8L3.40 3.40" stroke="#ee8f1a" stroke-width="2.5" stroke-linecap="round"/><path d="M8 8L8.00 1.50" stroke="#ee8f1a" stroke-width="2.5" stroke-linecap="round"/><path d="M8 8L12.60 3.40" stroke="#ee8f1a" stroke-width="2.5" stroke-linecap="round"/><circle cx="8" cy="8" r="4" fill="#f5a824"/><circle cx="8" cy="8" r="2.2" fill="#fde06e"/></svg>
<svg style="left:113px;top:681px" width="16" height="16" viewBox="0 0 16 16"><path d="M1.6 1.4Q8 6.5 13.6 12.6" stroke="#d43324" stroke-width="2.3" stroke-linecap="round" fill="none"/><path d="M14.2 1.6Q7 7.5 2.2 14.4" stroke="#c92b1e" stroke-width="2" stroke-linecap="round" fill="none"/></svg>
<svg style="left:61px;top:287px" width="16" height="13" viewBox="0 0 16 13"><rect x=".5" y=".5" width="15" height="12" fill="#fbfbfd" stroke="#8f97a8"/><rect x="1" y="3.6" width="14" height="2.6" fill="#f6a32a"/><path d="M4.5 1v11M8 1v11M11.5 1v11" stroke="#cfd5e2" stroke-width=".7"/><path d="M1 8.5h14M1 10.5h14" stroke="#d5dbe6" stroke-width=".6"/></svg>
<svg style="left:16px;top:334px" width="16" height="16" viewBox="0 0 16 16"><rect width="16" height="16" fill="#0b1f5a"/><rect x="2" y="2" width="12" height="2" fill="#fff"/><rect x="2" y="2" width="1.6" height="10" fill="#fff"/><rect x="4.4" y="5" width="2.8" height="3.6" fill="#fff"/><path d="M2.5 14.6Q8 13 10.3 5.2L10.6 12.5Q7 14.6 2.5 14.6z" fill="#fff"/><rect x="11" y="7" width="1.2" height="7" fill="#fff"/><rect x="11" y="5" width="1.2" height="1.2" fill="#fff"/><rect x="13" y="9.5" width="1.2" height="4.5" fill="#fff"/></svg>
<div style="left:0px;top:875px;width:1171px;height:1px;background:#000"></div>
<div style="left:0px;top:0px;width:1px;height:876px;background:#000"></div>
</div>
</body></html>
